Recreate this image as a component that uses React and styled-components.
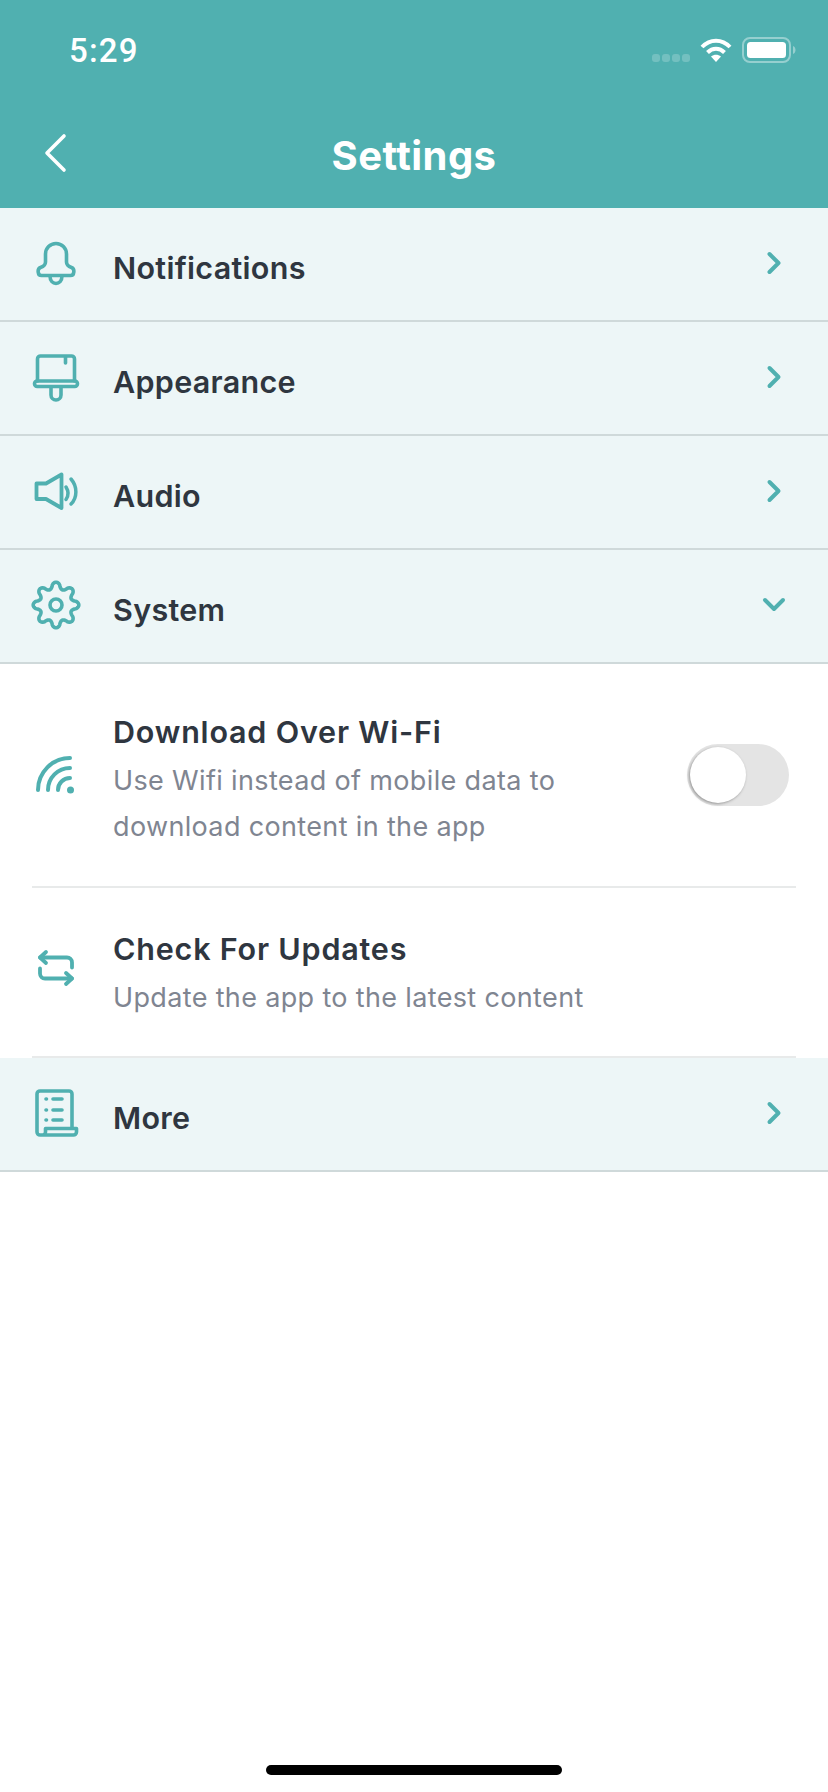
import styled, { createGlobalStyle } from "styled-components"

const teal = "#50b0b0"

const Global = createGlobalStyle`
    html, body { margin: 0; padding: 0; background: #ffffff; }
    * { box-sizing: border-box; }
`

// gear outline, 8 rounded teeth
function gearPath() {
    let d = ""
    for (let i = 0; i <= 240; i++) {
        const a = (i / 240) * Math.PI * 2
        const wave = Math.cos(8 * a)
        const r = 19.6 + 3.2 * Math.sign(wave) * Math.pow(Math.abs(wave), 0.7)
        const x = 28 + r * Math.sin(a)
        const y = 28 - r * Math.cos(a)
        d += (i === 0 ? "M" : "L") + x.toFixed(2) + " " + y.toFixed(2)
    }
    return d + "Z"
}

const Icon = ({ children }) => (
    <IconSvg viewBox="0 0 56 56" fill="none" stroke={teal} strokeWidth="3.6" strokeLinecap="round" strokeLinejoin="round">
        {children}
    </IconSvg>
)

const BellIcon = () => (
    <Icon>
        <path d="M17.5 19a10.5 10.5 0 0 1 21 0v8c0 2.5 2 4.5 5 5.5 3.500 1.200 3 8-1 8H13.500c-4 0-4.500-6.800-1-8 3-1 5-3 5-5.500z" />
        <path d="M22 41c0 10 12 10 12 0" />
    </Icon>
)
const BrushIcon = () => (
    <Icon>
        <path d="M9.500 32V10a3 3 0 0 1 3-3h31a3 3 0 0 1 3 3v22" />
        <rect x="6.500" y="32" width="43" height="5.500" rx="2.700" />
        <path d="M23 38v8a5 5 0 0 0 10 0v-8" />
        <path d="M37.500 8v6" />
    </Icon>
)
const SpeakerIcon = () => (
    <Icon>
        <path d="M8.500 20.500H18L33.500 11.500V45L18 36H8.500z" strokeWidth="3.800" />
        <path d="M38 24c2.500 4 2.500 9 0 12.500" strokeWidth="3.500" />
        <path d="M43 16c6.500 7.500 6.500 18.500 0 25" strokeWidth="3.500" />
    </Icon>
)
const GearIcon = () => (
    <Icon>
        <path d={gearPath()} />
        <circle cx="28" cy="28" r="6" />
    </Icon>
)
const WifiIcon = () => (
    <Icon>
        <g strokeWidth="4">
            <path d="M10 44a32 32 0 0 1 32-32" />
            <path d="M20 44a22 22 0 0 1 22-22" />
            <path d="M30 44a12 12 0 0 1 12-12" />
        </g>
        <circle cx="42.500" cy="44" r="3.500" fill={teal} stroke="none" />
    </Icon>
)
const UpdateIcon = () => (
    <Icon>
        <g strokeWidth="3.800">
            <path d="M18 12l-6 5.500 6 5.500" />
            <path d="M12 17.500h27a5 5 0 0 1 5 5v5" />
            <path d="M38 33l6 5.500-6 5.500" />
            <path d="M44 38.500H17a5 5 0 0 1-5-5v-5" />
        </g>
    </Icon>
)
const ScrollIcon = () => (
    <Icon>
        <path d="M44 42V9a3 3 0 0 0-3-3H12a3 3 0 0 0-3 3v38a3 3 0 0 0 3 3h2.500a3 3 0 0 0 3-3v-3.500H48.500V47a3 3 0 0 1-3 3H14" />
        <path d="M25 14h9M25 25h9M25 35h9" />
        <path d="M18 14h.5M18 25h.5M18 35h.5" />
    </Icon>
)

const ChevronRight = () => (
    <ChevronSvg viewBox="0 0 26 26" fill="none" stroke={teal} strokeWidth="4" strokeLinecap="round" strokeLinejoin="round">
        <path d="M8.500 4l9 9-9 9" />
    </ChevronSvg>
)
const ChevronDown = () => (
    <ChevronSvg viewBox="0 0 26 26" fill="none" stroke={teal} strokeWidth="4" strokeLinecap="round" strokeLinejoin="round">
        <path d="M4 8l9 9 9-9" />
    </ChevronSvg>
)

const MenuRow = ({ icon, label, open }) => (
    <Row>
        {icon}
        <RowLabel>{label}</RowLabel>
        {open ? <ChevronDown /> : <ChevronRight />}
    </Row>
)

export default function App() {
    return (
        <Page>
            <Global />
            <Header>
                <StatusBar>
                    <Time>5:29</Time>
                    <StatusIcons>
                        <svg width="38" height="10" viewBox="0 0 38 10" fill="#ffffff" opacity="0.2">
                            <rect x="0" y="1" width="8" height="8" rx="3" />
                            <rect x="10" y="1" width="8" height="8" rx="3" />
                            <rect x="20" y="1" width="8" height="8" rx="3" />
                            <rect x="30" y="1" width="8" height="8" rx="3" />
                        </svg>
                        <svg width="32" height="24" viewBox="0 0 32 24" fill="none" stroke="#ffffff" strokeWidth="4">
                            <path d="M2 9c8-8.500 20-8.500 28 0" />
                            <path d="M7.500 14.500c5-5 12-5 17 0" />
                            <path d="M16 24l-5-5.500c3-2.500 7-2.500 10 0z" fill="#ffffff" stroke="none" />
                        </svg>
                        <svg width="54" height="26" viewBox="0 0 54 26">
                            <rect x="1" y="1" width="47" height="24" rx="7" fill="none" stroke="#ffffff" strokeOpacity="0.4" strokeWidth="2" />
                            <rect x="5" y="5" width="39" height="16" rx="3.500" fill="#ffffff" />
                            <path d="M51 9c2 1 2.500 2.500 2.500 4s-.5 3-2.500 4z" fill="#ffffff" opacity="0.4" />
                        </svg>
                    </StatusIcons>
                </StatusBar>
                <NavBar>
                    <BackButton viewBox="0 0 24 40" fill="none" stroke="#ffffff" strokeWidth="3.600" strokeLinecap="round" strokeLinejoin="round">
                        <path d="M20 3L3 20l17 17" />
                    </BackButton>
                    <Title>Settings</Title>
                </NavBar>
            </Header>

            <MenuRow icon={<BellIcon />} label="Notifications" />
            <MenuRow icon={<BrushIcon />} label="Appearance" />
            <MenuRow icon={<SpeakerIcon />} label="Audio" />
            <MenuRow icon={<GearIcon />} label="System" open />

            <SubRow>
                <WifiIcon />
                <SubText>
                    <SubTitle>Download Over Wi-Fi</SubTitle>
                    <SubDesc>Use Wifi instead of mobile data to<br />download content in the app</SubDesc>
                </SubText>
                <Toggle><Knob /></Toggle>
            </SubRow>
            <SubRow $short>
                <UpdateIcon />
                <SubText>
                    <SubTitle>Check For Updates</SubTitle>
                    <SubDesc>Update the app to the latest content</SubDesc>
                </SubText>
            </SubRow>

            <MenuRow icon={<ScrollIcon />} label="More" />

            <HomeIndicator />
        </Page>
    )
}

const Page = styled.div`
    width: 828px;
    height: 1792px;
    display: flex;
    flex-direction: column;
    background: #ffffff;
    font-family: "Inter", "Noto Sans", sans-serif;
`
const Header = styled.header`
    height: 208px;
    background: ${teal};
    color: #ffffff;
`
const StatusBar = styled.div`
    height: 100px;
    display: flex;
    align-items: center;
    justify-content: space-between;
    padding: 0 32px 0 69px;
`
const Time = styled.span`
    font-family: "Roboto", sans-serif;
    font-size: 33px;
    font-weight: 500;
    letter-spacing: 1.2px;
`
const StatusIcons = styled.div`
    display: flex;
    align-items: center;
    gap: 10px;
    svg:first-child { margin-top: 16px; }
`
const NavBar = styled.div`
    position: relative;
    height: 108px;
    display: flex;
    justify-content: center;
    padding-top: 31px;
`
const BackButton = styled.svg`
    position: absolute;
    left: 44px;
    top: 33px;
    width: 24px;
    height: 40px;
`
const Title = styled.h1`
    margin: 0;
    font-size: 40px;
    font-weight: 700;
    line-height: 50px;
    letter-spacing: 0.45px;
`
const IconSvg = styled.svg`
    flex: none;
    width: 56px;
    height: 56px;
`
const ChevronSvg = styled.svg`
    flex: none;
    width: 26px;
    height: 26px;
    margin-left: auto;
`
const Row = styled.div`
    height: 114px;
    display: flex;
    align-items: center;
    padding: 0 41px 2px 28px;
    background: #edf6f7;
    border-bottom: 2px solid #cfd9da;
`
const RowLabel = styled.span`
    margin: 8px 0 0 29px;
    font-size: 30.5px;
    font-weight: 600;
    letter-spacing: 0.3px;
    color: #2f3640;
`
const SubRow = styled.div`
    height: ${p => (p.$short ? "170px" : "224px")};
    margin: 0 32px;
    padding: ${p => (p.$short ? "6px" : "12px")} 7px 0 0;
    display: flex;
    align-items: center;
    border-bottom: 2px solid #e8eaea;
    & > ${IconSvg} { margin: 0 0 14px -4px; }
`
const SubText = styled.div`
    margin-left: 29px;
    flex: 1;
`
const SubTitle = styled.div`
    font-size: 30.5px;
    font-weight: 600;
    line-height: 40px;
    letter-spacing: 0.8px;
    margin-bottom: 6px;
    color: #2f3640;
`
const SubDesc = styled.div`
    font-size: 27px;
    line-height: 46px;
    letter-spacing: 0.35px;
    color: #7f8591;
`
const Toggle = styled.div`
    flex: none;
    position: relative;
    width: 102px;
    height: 62px;
    margin-bottom: 12px;
    border-radius: 31px;
    background: #e4e4e4;
`
const Knob = styled.div`
    position: absolute;
    left: 3px;
    top: 3px;
    width: 56px;
    height: 56px;
    border-radius: 50%;
    background: #ffffff;
    box-shadow: -1px 1px 3px rgba(0, 0, 0, 0.35);
`
const HomeIndicator = styled.div`
    width: 296px;
    height: 10px;
    margin: auto auto 17px;
    border-radius: 5px;
    background: #000000;
`
